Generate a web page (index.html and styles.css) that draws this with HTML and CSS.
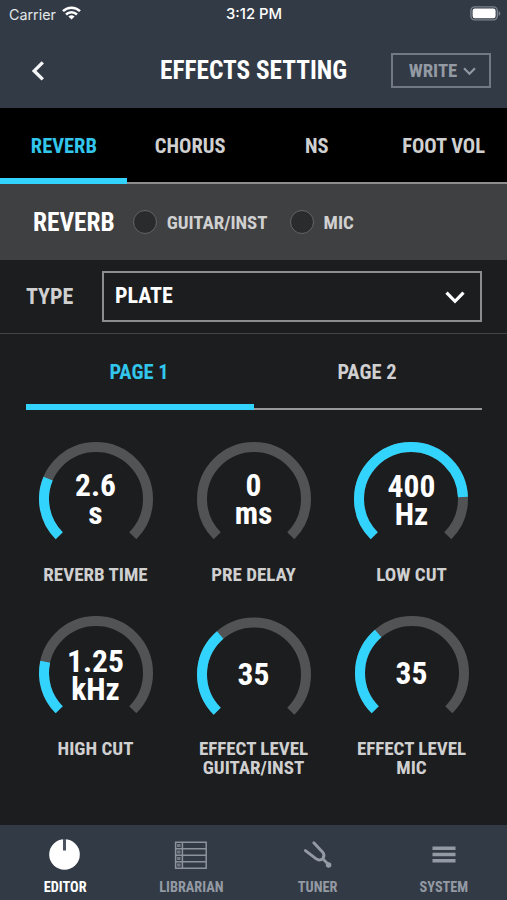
FILE: index.html
```
<!DOCTYPE html>
<html lang="en">
<head>
  <meta charset="UTF-8" />
  <meta name="viewport" content="width=device-width, initial-scale=1.0"/>
  <title>Effects Setting</title>
  <link rel="stylesheet" href="styles.css">
</head>
<body>

  <header class="header">
    <div class="status-bar">
      <div class="carrier">
        <span>Carrier</span>
        <svg width="19" height="14" viewBox="0 0 19 14" fill="none" stroke="#fff" stroke-width="2.5">
          <path d="M1 5.2a12.2 12.2 0 0 1 17 0"/>
          <path d="M4 8.5a8 8 0 0 1 11 0"/>
          <path d="M9.5 13.6L6.4 10.6a4.5 4.5 0 0 1 6.2 0z" fill="#fff" stroke="none"/>
        </svg>
      </div>
      <span class="clock">3:12 PM</span>
      <svg class="battery" width="31" height="15" viewBox="0 0 31 15">
        <rect x="0.9" y="0.9" width="26.4" height="13" rx="3.8" fill="none" stroke="#7b828b" stroke-width="1.4"/>
        <rect x="2.6" y="2.6" width="23" height="9.6" rx="2.2" fill="#fff"/>
        <path d="M28.6 5v5c1.1-.4 1.7-1.4 1.7-2.5s-.6-2.1-1.7-2.5z" fill="#7b828b"/>
      </svg>
    </div>
    <div class="title-bar">
      <svg class="back" width="14" height="20" viewBox="0 0 14 20" fill="none" stroke="#f2f4f6" stroke-width="3.4">
        <path d="M11.8 1.4L3.2 9.9l8.6 8.5"/>
      </svg>
      <h1>EFFECTS SETTING</h1>
      <button class="write">
        WRITE
        <svg width="13" height="9" viewBox="0 0 13 9" fill="none" stroke="#949aa3" stroke-width="2">
          <path d="M1 1.2l5.5 5.6L12 1.2"/>
        </svg>
      </button>
    </div>
  </header>

  <nav class="tabs">
    <a class="tab active">REVERB</a>
    <a class="tab">CHORUS</a>
    <a class="tab">NS</a>
    <a class="tab">FOOT VOL</a>
  </nav>

  <section class="switches">
    <h2>REVERB</h2>
    <span class="led"></span>
    <span class="switch-label guitar">GUITAR/INST</span>
    <span class="led"></span>
    <span class="switch-label">MIC</span>
  </section>

  <section class="type-row">
    <span class="type-label">TYPE</span>
    <div class="select">
      <span>PLATE</span>
      <svg width="20" height="13" viewBox="0 0 20 13" fill="none" stroke="#fff" stroke-width="3.2">
        <path d="M1.5 1.6L10 10.3l8.5-8.7"/>
      </svg>
    </div>
  </section>

  <main class="content">
    <nav class="pages">
      <a class="page active">PAGE 1</a>
      <a class="page">PAGE 2</a>
    </nav>
    <div class="knobs" id="knobs"></div>
  </main>

  <footer class="bottom-nav">
    <a class="nav-item active">
      <svg width="34" height="34" viewBox="0 0 34 34">
        <circle cx="16.5" cy="16.5" r="15.3" fill="#fff"/>
        <path d="M16.5 1v11.500" stroke="#4b535e" stroke-width="3"/>
      </svg>
      <span>EDITOR</span>
    </a>
    <a class="nav-item">
      <svg width="34" height="34" viewBox="0 0 34 34" fill="none" stroke="#8d939c" stroke-width="1.5">
        <path d="M1.6 4.200h30.600v26H1.600zM8.400 4.200v26M1.600 10.700h30.600M1.600 17.200h30.600M1.600 23.700h30.600"/>
        <path d="M4.8 6v3M4.8 12.500v3M4.800 19v3M4.800 25.500v3" stroke="#737a84" stroke-width="3.400"/>
      </svg>
      <span>LIBRARIAN</span>
    </a>
    <a class="nav-item">
      <svg width="34" height="34" viewBox="0 0 34 34" fill="none" stroke="#949aa3" stroke-width="2.9" stroke-linecap="round">
        <path d="M12.800 4.800l8.900 9.400q2.600 3.300.2 6.300q-3.300 2.900-7 .2L4.400 12.600"/>
        <path d="M22 21l5 5"/>
        <circle cx="27.6" cy="27" r="2.8" fill="#949aa3" stroke="none"/>
      </svg>
      <span>TUNER</span>
    </a>
    <a class="nav-item">
      <svg width="34" height="34" viewBox="0 0 34 34" stroke="#949aa3" stroke-width="3.4">
        <path d="M5.5 10.300h23M5.500 16.500h23M5.500 22.700h23"/>
      </svg>
      <span>SYSTEM</span>
    </a>
  </footer>

  <script>
    const knobs = [
      { value: "2.6<br>s", label: "REVERB TIME", level: 0.252 },
      { value: "0<br>ms", label: "PRE DELAY", level: 0 },
      { value: "400<br>Hz", label: "LOW CUT", level: 0.825 },
      { value: "1.25<br>kHz", label: "HIGH CUT", level: 0.213 },
      { value: "35", label: "EFFECT LEVEL<br>GUITAR/INST", level: 0.35 },
      { value: "35", label: "EFFECT LEVEL<br>MIC", level: 0.35 }
    ];

    const arc = "M22.23 95.77A52 52 0 1 1 95.77 95.77";
    const list = document.getElementById("knobs");

    knobs.forEach(k => {
      const fill = k.level > 0
        ? `<path class="fill" d="${arc}" pathLength="100" stroke-dasharray="${k.level * 100} 200"/>`
        : "";
      list.insertAdjacentHTML("beforeend", `<div class="knob">
        <div class="dial">
          <svg width="118" height="118" viewBox="0 0 118 118">
            <path class="track" d="${arc}"/>
            ${fill}
          </svg>
          <div class="value">${k.value}</div>
        </div>
        <div class="label">${k.label}</div>
      </div>`);
    });
  </script>
</body>
</html>
```

FILE: styles.css
```
* {
  box-sizing: border-box;
}

body {
  margin: 0;
  width: 507px;
  height: 900px;
  display: flex;
  flex-direction: column;
  overflow: hidden;
  background-color: #1c1d1f;
  color: #d0d0d1;
  font-family: "Roboto Condensed", Roboto, sans-serif;
  font-stretch: 75%;
  font-weight: 700;
}

h1, h2 {
  margin: 0;
  padding-top: 1px;
  color: #fff;
  font-size: 25.3px;
  line-height: 30px;
}

svg {
  display: block;
}

.header {
  height: 108px;
  background-color: #323a46;
}

.status-bar {
  height: 28px;
  display: grid;
  grid-template-columns: 1fr auto 1fr;
  align-items: center;
  padding: 0 6px 0 9px;
  font-family: Inter, sans-serif;
  font-stretch: normal;
  font-size: 14.3px;
  font-weight: 400;
  color: #e4e7ea;
}

.carrier {
  display: flex;
  align-items: center;
  gap: 6px;
}

.carrier svg {
  margin-top: -2px;
}

.clock {
  margin-left: -2px;
  font-size: 14.8px;
  font-weight: 500;
  color: #fff;
}

.battery {
  justify-self: end;
  margin-top: -2px;
}

.title-bar {
  height: 84px;
  display: grid;
  grid-template-columns: 1fr auto 1fr;
  align-items: center;
  padding: 0 16px 0 31px;
}

.title-bar h1 {
  margin: 0 15px 0 0;
}

.back {
  margin-top: 1px;
}

.write {
  justify-self: end;
  width: 100px;
  height: 35px;
  display: flex;
  align-items: center;
  justify-content: center;
  gap: 6px;
  padding: 2px 0 0 3px;
  border: 2px solid #737983;
  background: none;
  color: #949aa3;
  font: inherit;
  font-size: 18.8px;
}

.tabs {
  height: 76px;
  display: grid;
  grid-template-columns: repeat(4, 1fr);
  background-color: #000;
}

.tab {
  display: flex;
  align-items: center;
  justify-content: center;
  padding-top: 2px;
  border-bottom: 2px solid #8c8d8e;
  font-size: 20.5px;
}

.tab.active {
  padding: 6px 0 0 1px;
  border-bottom: 6px solid #32d4fe;
  color: #32c6ec;
}

.switches {
  height: 76px;
  display: flex;
  align-items: center;
  padding: 0 0 0 33px;
  background-color: #3f4042;
}

.led {
  width: 24px;
  height: 24px;
  margin: 0 10px 0 18px;
  border: 1.5px solid #646567;
  border-radius: 50%;
  background-color: #2a2b2d;
}

.switch-label {
  font-size: 18.9px;
}

.guitar {
  margin-right: 4px;
}

.type-row {
  height: 74px;
  display: flex;
  align-items: center;
  padding: 0 25px 0 26px;
  border-bottom: 1px solid #434446;
}

.type-label {
  width: 76px;
  font-size: 22px;
}

.select {
  flex: 1;
  height: 51px;
  display: flex;
  align-items: center;
  justify-content: space-between;
  padding: 0 15px 2px 11px;
  border: 2px solid #8c8d8e;
  color: #fff;
  font-size: 22px;
}

.select svg {
  margin-top: 3px;
}

.content {
  flex: 1;
}

.pages {
  height: 76px;
  margin: 0 25px 0 26px;
  display: grid;
  grid-template-columns: 1fr 1fr;
}

.page {
  display: flex;
  align-items: center;
  justify-content: center;
  padding: 2px 2px 0 0;
  border-bottom: 2px solid #98999a;
  font-size: 20.5px;
}

.page.active {
  padding-top: 6px;
  border-bottom: 6px solid #32d4fe;
  color: #32c6ec;
}

.knobs {
  display: grid;
  grid-template-columns: repeat(3, 158px);
  grid-auto-rows: 174px;
  padding: 30px 17px 0 16.5px;
}

.knob {
  display: flex;
  flex-direction: column;
  align-items: center;
}

.dial {
  display: grid;
  place-items: center;
}

/* low cut and guitar level dials sit slightly off the grid */
.knob:nth-child(3) svg {
  transform: translateX(-1px);
}

.knob:nth-child(5) svg {
  transform: translateY(1.5px);
}

.dial > * {
  grid-area: 1 / 1;
}

.dial path {
  fill: none;
  stroke-width: 10;
}

.track {
  stroke: #525355;
}

.fill {
  stroke: #32d4fe;
}

.value {
  padding-top: 2px;
  color: #fff;
  font-size: 31.5px;
  line-height: 28.5px;
  text-align: center;
}

.knob:nth-child(3) .value,
.knob:nth-child(5) .value {
  padding-top: 4px;
}

.knob:nth-child(4) .value {
  padding-top: 6px;
}

.label {
  margin-top: 7px;
  font-size: 19px;
  line-height: 19px;
  text-align: center;
}

.bottom-nav {
  height: 75px;
  display: grid;
  grid-template-columns: repeat(4, 1fr);
  padding-left: 2px;
  background-color: #323a46;
}

.nav-item {
  display: flex;
  flex-direction: column;
  align-items: center;
  gap: 7px;
  padding-top: 13px;
  color: #949aa3;
  font-size: 14.3px;
  line-height: 17px;
}

.nav-item.active {
  color: #fff;
}
```
